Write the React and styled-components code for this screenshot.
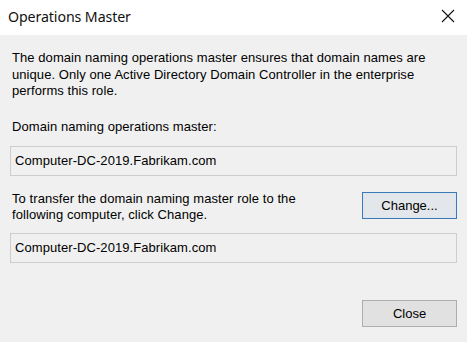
import React from "react";
import styled, { createGlobalStyle } from "styled-components";

const Global = createGlobalStyle`
  html, body { margin: 0; padding: 0; background: #f0f0f0; }
  body { width: 467px; height: 342px; overflow: hidden; }
  #root { width: 467px; height: 342px; }
`;

const Dialog = styled.div`
  width: 467px;
  height: 342px;
  display: flex;
  flex-direction: column;
  background: #f0f0f0;
  font-family: "Liberation Sans", Arial, sans-serif;
  color: #000;
`;

const TitleBar = styled.div`
  height: 35px;
  flex: none;
  background: #ffffff;
  display: flex;
  align-items: center;
  justify-content: space-between;
  padding: 0 10px 0 8px;
`;

const Title = styled.div`
  font-family: "Noto Sans", "Open Sans", sans-serif;
  font-size: 14.2px;
  letter-spacing: -0.1px;
  color: #111;
  margin-top: -2px;
`;

const CloseX = styled.div`
  width: 18px;
  height: 18px;
  display: flex;
  align-items: center;
  justify-content: center;
  margin-top: -3px;
`;

const Content = styled.div`
  flex: 1;
  display: flex;
  flex-direction: column;
  padding: 15px 10px 0 10px;
`;

const Text = styled.div`
  font-size: 13px;
  letter-spacing: 0.07px;
  line-height: ${(p) => p.$lh || 16.5}px;
  padding-left: 2px;
  margin-top: ${(p) => p.$mt || 0}px;
`;

const Field = styled.div`
  height: 28px;
  border: 1px solid #cdcdcd;
  background: #f0f0f0;
  display: flex;
  align-items: center;
  padding-left: 4px;
  font-size: 13px;
  letter-spacing: 0.07px;
  margin-top: ${(p) => p.$mt || 0}px;
`;

const Row = styled.div`
  display: flex;
  justify-content: space-between;
  align-items: flex-start;
  margin-top: ${(p) => p.$mt || 0}px;
`;

const Button = styled.div`
  box-sizing: border-box;
  width: 95px;
  height: 27px;
  display: flex;
  align-items: center;
  justify-content: center;
  font-size: 13px;
  background: ${(p) => (p.$primary ? "#e3e6ea" : "#e1e1e1")};
  border: 1px solid ${(p) => (p.$primary ? "#3d7ab5" : "#adadad")};
  box-shadow: ${(p) => (p.$primary ? "inset 0 0 0 1px #dbe6f1" : "none")};
  margin-top: ${(p) => p.$mt || 0}px;
`;

export default function App() {
  return (
    <>
      <Global />
      <Dialog>
        <TitleBar>
          <Title>Operations Master</Title>
          <CloseX>
            <svg width="14" height="14" viewBox="0 0 14 14">
              <path d="M1 1 L13 13 M13 1 L1 13" stroke="#111" strokeWidth="1.1" fill="none" />
            </svg>
          </CloseX>
        </TitleBar>
        <Content>
          <Text>
            The domain naming operations master ensures that domain names are
            <br />
            unique. Only one Active Directory Domain Controller in the enterprise
            <br />
            performs this role.
          </Text>
          <Text $lh={16} $mt={19}>Domain naming operations master:</Text>
          <Field $mt={11}>Computer-DC-2019.Fabrikam.com</Field>
          <Row $mt={15}>
            <Text>
              To transfer the domain naming master role to the
              <br />
              following computer, click Change.
            </Text>
            <Button $primary $mt={1}>Change...</Button>
          </Row>
          <Field $mt={9}>Computer-DC-2019.Fabrikam.com</Field>
          <Row $mt={37}>
            <span />
            <Button>Close</Button>
          </Row>
        </Content>
      </Dialog>
    </>
  );
}
